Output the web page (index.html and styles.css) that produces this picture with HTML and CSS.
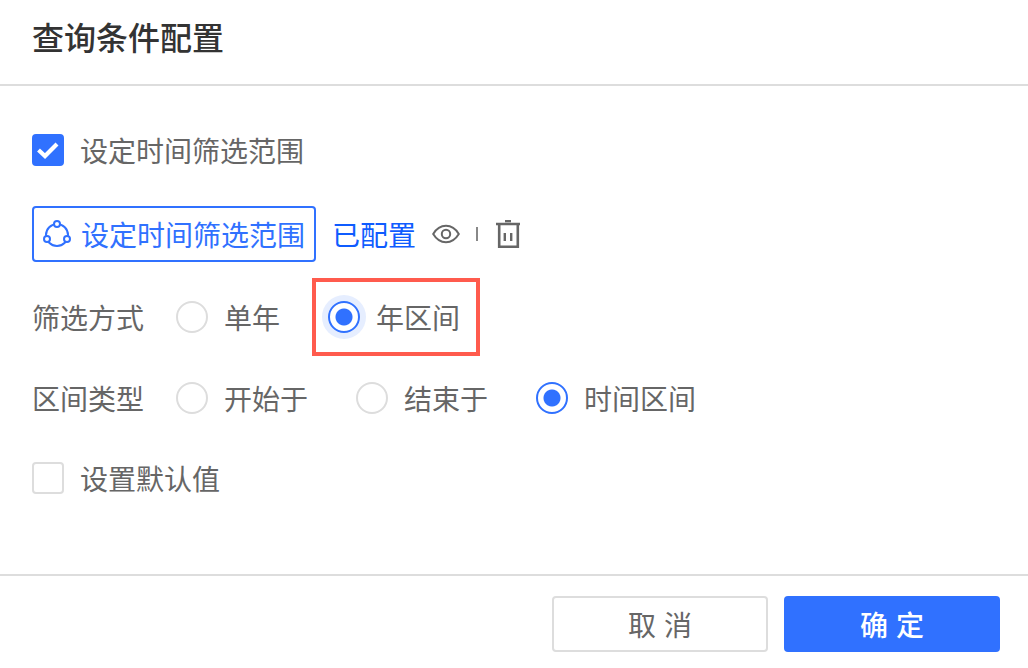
FILE: index.html
```html
<!DOCTYPE html>
<html>
<head>
  <meta charset="UTF-8">
  <title>查询条件配置</title>
  <link rel="stylesheet" href="styles.css">
</head>
<body>
<div class="dialog">
  <div class="dialog-head">查询条件配置</div>
  <div class="dialog-body">
    <div class="row row-check1">
      <span class="check checked">
        <svg width="22" height="18" viewBox="0 0 22 18"><path d="M1.500 9l6.500 6L20 3" fill="none" stroke="#fff" stroke-width="4.200"/></svg>
      </span>
      <span class="check-text">设定时间筛选范围</span>
    </div>
    <div class="row row-config">
      <div class="config-btn">
        <svg width="30" height="30" viewBox="0 0 30 30" fill="#fff" stroke="#3071ff" stroke-width="2">
          <circle cx="14" cy="16" r="11"/>
          <circle cx="14" cy="5" r="3"/>
          <circle cx="4" cy="20" r="3"/>
          <circle cx="24" cy="20" r="3"/>
        </svg>
        <span>设定时间筛选范围</span>
      </div>
      <span class="config-done">已配置</span>
      <svg class="eye" width="28" height="20" viewBox="0 0 28 20" fill="none" stroke="#666" stroke-width="2">
        <path d="M1.200 10C4.500 4.500 9 1.800 14 1.800S23.500 4.500 26.800 10C23.500 15.500 19 18.200 14 18.200S4.500 15.500 1.200 10Z"/>
        <circle cx="14" cy="10" r="4.200"/>
      </svg>
      <span class="sep"></span>
      <svg class="trash" width="24" height="28" viewBox="0 0 24 28" fill="none" stroke="#666">
        <path d="M0 4H24M9 1H15" stroke-width="2.400"/>
        <path d="M3.200 4V26.700H21.800V4" stroke-width="2.600"/>
        <path d="M8.800 13V21M15.200 13V21" stroke-width="2.400"/>
      </svg>
    </div>
    <div class="row row-mode">
      <span class="field-label">筛选方式</span>
      <label class="radio-item"><span class="radio"></span>单年</label>
      <label class="radio-item marked"><span class="radio on halo"></span>年区间</label>
    </div>
    <div class="row row-range">
      <span class="field-label">区间类型</span>
      <label class="radio-item wide"><span class="radio"></span>开始于</label>
      <label class="radio-item wide"><span class="radio"></span>结束于</label>
      <label class="radio-item"><span class="radio on"></span>时间区间</label>
    </div>
    <div class="row row-check2">
      <span class="check"></span>
      <span class="check-text">设置默认值</span>
    </div>
  </div>
  <div class="dialog-foot">
    <div class="btn btn-cancel">取 消</div>
    <div class="btn btn-ok">确 定</div>
  </div>
</div>
</body>
</html>
```

FILE: styles.css
```css
* {
  box-sizing: border-box;
}

body {
  margin: 0;
  background-color: #ffffff;
  color: #666666;
  font-family: "Liberation Sans", "Noto Sans CJK SC", sans-serif;
  font-size: 28px;
}

.dialog {
  width: 1028px;
  height: 668px;
}

.dialog-head {
  height: 86px;
  padding: 0 32px 12px;
  border-bottom: 2px solid #dddddd;
  display: flex;
  align-items: center;
  color: #333333;
  font-size: 32px;
  font-weight: 500;
}

.dialog-body {
  height: 488px;
  padding: 48px 28px 0 32px;
}

.row {
  display: flex;
  align-items: center;
}

.row-check1 {
  height: 32px;
}

.row-config {
  height: 56px;
  margin-top: 40px;
}

.row-mode {
  height: 78px;
  margin-top: 16px;
}

.row-range {
  height: 40px;
  margin-top: 22px;
}

.row-check2 {
  height: 32px;
  margin-top: 44px;
}

.check {
  width: 32px;
  height: 32px;
  border: 2px solid #dddddd;
  border-radius: 4px;
  display: flex;
  align-items: center;
  justify-content: center;
}

.check.checked {
  border-color: #3071ff;
  background-color: #3071ff;
}

.check-text {
  margin-left: 16px;
}

.config-btn {
  width: 284px;
  height: 56px;
  padding-left: 9px;
  border: 2px solid #3071ff;
  border-radius: 4px;
  display: flex;
  align-items: center;
  color: #3071ff;
}

.config-btn span {
  margin-left: 8px;
  white-space: nowrap;
}

.config-done {
  margin-left: 16px;
  color: #0f5cff;
}

.eye {
  margin-left: 16px;
}

.sep {
  width: 2px;
  height: 14px;
  margin-left: 16px;
  background-color: #888888;
}

.trash {
  margin-left: 18px;
}

.field-label {
  width: 144px;
}

.radio-item {
  display: flex;
  align-items: center;
}

.radio-item.wide {
  margin-right: 48px;
}

.radio {
  width: 32px;
  height: 32px;
  margin-right: 16px;
  border: 2px solid #dddddd;
  border-radius: 50%;
  flex: none;
}

.radio.on {
  border-color: #3071ff;
  background: radial-gradient(circle, #3071ff 0, #3071ff 8px, #ffffff 9px);
}

.radio.halo {
  box-shadow: 0 0 0 6px #e6eeff;
}

.marked {
  height: 78px;
  margin-left: 32px;
  padding: 0 16px 0 12px;
  border: 4px solid #ff5b4d;
}

.dialog-foot {
  height: 94px;
  padding: 20px 28px 0 0;
  border-top: 2px solid #dddddd;
  display: flex;
  justify-content: flex-end;
  gap: 16px;
}

.btn {
  width: 216px;
  height: 56px;
  border-radius: 4px;
  display: flex;
  align-items: center;
  justify-content: center;
  white-space: pre;
}

.btn-cancel {
  border: 2px solid #dddddd;
}

.btn-ok {
  background-color: #3071ff;
  color: #ffffff;
  font-weight: 500;
}
```
